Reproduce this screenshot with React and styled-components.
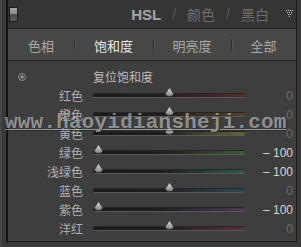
import React from 'react'
import styled, { createGlobalStyle } from 'styled-components'

const GlobalStyle = createGlobalStyle`
  html, body {
    margin: 0;
    padding: 0;
    background: #3a3a3a;
  }
  body {
    font-family: "Noto Sans CJK SC", "Liberation Sans", sans-serif;
  }
`

const sliders = [
  { label: '红色', value: 0, tint: '#5c2a2c' },
  { label: '橙色', value: 0, tint: '#5a4226' },
  { label: '黄色', value: 0, tint: '#66663a' },
  { label: '绿色', value: -100, tint: '#3e5a36' },
  { label: '浅绿色', value: -100, tint: '#2e5a4e' },
  { label: '蓝色', value: 0, tint: '#2e4a52' },
  { label: '紫色', value: -100, tint: '#4a3c56' },
  { label: '洋红', value: 0, tint: '#5a2e42' },
]

const tabs = ['色相', '饱和度', '明亮度', '全部']

function Thumb() {
  return (
    <svg width="9" height="10" viewBox="0 0 9 10">
      <defs>
        <linearGradient id="tg" x1="0" y1="0" x2="0" y2="1">
          <stop offset="0" stopColor="#e6e6e6" />
          <stop offset="1" stopColor="#7c7c7c" />
        </linearGradient>
      </defs>
      <path d="M4.5 0.5 L8.5 6.5 Q8.5 9.5 4.5 9.5 Q0.5 9.5 0.5 6.5 Z" fill="url(#tg)" stroke="#2a2a2a" strokeWidth="0.6" />
    </svg>
  )
}

function Menu() {
  const dots = []
  const rows = [[0, 2, 4, 6], [1, 3, 5], [2, 4], [3]]
  rows.forEach((xs, r) => xs.forEach(x => dots.push(<rect key={r + '-' + x} x={x + 1} y={r * 2 + 1} width="1" height="1" fill="#d0d0d0" />)))
  return (
    <svg width="9" height="9" viewBox="0 0 9 9">
      {dots}
    </svg>
  )
}

function App() {
  return (
    <>
      <GlobalStyle />
      <Page>
        <Panel>
          <Header>
            <PanelIcon />
            <Title>
              <Hsl>HSL</Hsl>
              <Slash>/</Slash>
              <Dim>颜色</Dim>
              <Slash>/</Slash>
              <Dim>黑白</Dim>
            </Title>
            <MenuButton>
              <Menu />
            </MenuButton>
          </Header>
          <TabBar>
            {tabs.map((t, i) => (
              <Tab key={t} active={i === 1} first={i === 0}>{t}</Tab>
            ))}
          </TabBar>
          <Body>
            <ResetRow>
              <ResetIcon />
              <ResetLabel>复位饱和度</ResetLabel>
            </ResetRow>
            {sliders.map(s => (
              <Row key={s.label}>
                <Label>{s.label}</Label>
                <Track tint={s.tint}>
                  <ThumbWrap style={{ left: 1 + ((s.value + 100) / 200) * 142 }}>
                    <Thumb />
                  </ThumbWrap>
                </Track>
                <Value changed={s.value !== 0}>{s.value === 0 ? '0' : '– ' + Math.abs(s.value)}</Value>
              </Row>
            ))}
          </Body>
          <Watermark>www.haoyidiansheji.com</Watermark>
        </Panel>
      </Page>
    </>
  )
}

export default App

const Page = styled.div`
  width: 301px;
  height: 247px;
  overflow: hidden;
  background: #3a3a3a;
  padding-left: 4px;
  box-sizing: border-box;
  border-left: 2px solid #474747;
`

const Panel = styled.div`
  position: relative;
  width: 288px;
  border-left: 2px solid #141414;
  border-right: 1px solid #1e1e1e;
  display: flex;
  flex-direction: column;
`

const Header = styled.div`
  height: 29px;
  background: #353535;
  display: flex;
  align-items: center;
  box-sizing: border-box;
  border-bottom: 1px solid #262626;
`

const PanelIcon = styled.div`
  width: 7px;
  height: 13px;
  margin-left: 1px;
  margin-top: 1px;
  border: 1px solid #1c1c1c;
  background: linear-gradient(#a6a6a6 0%, #8a8a8a 45%, #4c4c4c 50%, #5a5a5a 100%);
`

const Title = styled.div`
  margin-left: auto;
  display: flex;
  align-items: center;
  gap: 11px;
  margin-right: 16px;
`

const Hsl = styled.span`
  font-family: "Liberation Sans", sans-serif;
  font-weight: bold;
  font-size: 15px;
  color: #a4a4a4;
`

const Slash = styled.span`
  font-family: "Liberation Sans", sans-serif;
  color: #5c5c5c;
  font-size: 14px;
`

const Dim = styled.span`
  color: #6e6e6e;
  font-size: 14px;
`

const MenuButton = styled.div`
  width: 9px;
  height: 9px;
  margin-right: 2px;
  margin-top: -2px;
  display: flex;
`

const TabBar = styled.div`
  height: 32px;
  background: #474747;
  display: grid;
  grid-template-columns: 66px 79px 78px 1fr;
  border-bottom: 1px solid #252525;
  box-sizing: border-box;
`

const Tab = styled.div`
  position: relative;
  display: flex;
  align-items: center;
  justify-content: center;
  font-size: 13px;
  color: ${p => (p.active ? '#e8e8e8' : '#a9a9a9')};
  padding-top: 1px;

  &::before {
    content: '';
    display: ${p => (p.first ? 'none' : 'block')};
    position: absolute;
    left: 0;
    top: 10px;
    height: 12px;
    width: 1px;
    background: #2e2e2e;
    box-shadow: 1px 0 0 #555;
  }
`

const Body = styled.div`
  background: #3e3e3e;
  padding-top: 5px;
  height: 181px;
  box-sizing: border-box;
  border-bottom: 1px solid #1e1e1e;
`

const ResetRow = styled.div`
  height: 20px;
  display: flex;
  align-items: center;
`

const ResetIcon = styled.div`
  width: 6px;
  height: 6px;
  margin-left: 10px;
  margin-top: 2px;
  border-radius: 50%;
  border: 1px solid #8a8a8a;
  box-sizing: content-box;
  background: radial-gradient(circle, #8a8a8a 0 1.5px, #3e3e3e 2px);
`

const ResetLabel = styled.span`
  margin-left: 67px;
  font-size: 12px;
  color: #bcbcbc;
`

const Row = styled.div`
  height: 19px;
  display: grid;
  grid-template-columns: 75px 152px 38px;
  column-gap: 10px;
  align-items: center;
`

const Label = styled.span`
  text-align: right;
  font-size: 12px;
  color: #b0b0b0;
  margin-right: -10px;
  padding-right: 10px;
`

const Track = styled.div`
  position: relative;
  height: 3px;
  background: linear-gradient(to right, #1b1b1b 0%, #1e1e1e 45%, ${p => p.tint} 100%);
  border-top: 1px solid #262626;
  border-bottom: 1px solid #585858;
  border-radius: 2px;
`

const ThumbWrap = styled.div`
  position: absolute;
  top: -7px;
  width: 9px;
  height: 10px;
  display: flex;
`

const Value = styled.span`
  text-align: right;
  font-family: "Liberation Sans", sans-serif;
  font-size: 12px;
  color: ${p => (p.changed ? '#d4d4d4' : '#6c6c6c')};
  margin-left: -10px;
`

const Watermark = styled.div`
  position: absolute;
  left: -3px;
  top: 111px;
  font-family: "Liberation Mono", monospace;
  font-weight: bold;
  font-size: 21px;
  letter-spacing: 0.2px;
  color: rgba(205, 205, 205, 0.62);
  text-shadow: 1px 1px 0 rgba(30, 30, 30, 0.5);
  text-decoration: underline;
  text-decoration-thickness: 1px;
  text-underline-offset: 1px;
  white-space: nowrap;
  pointer-events: none;
`
